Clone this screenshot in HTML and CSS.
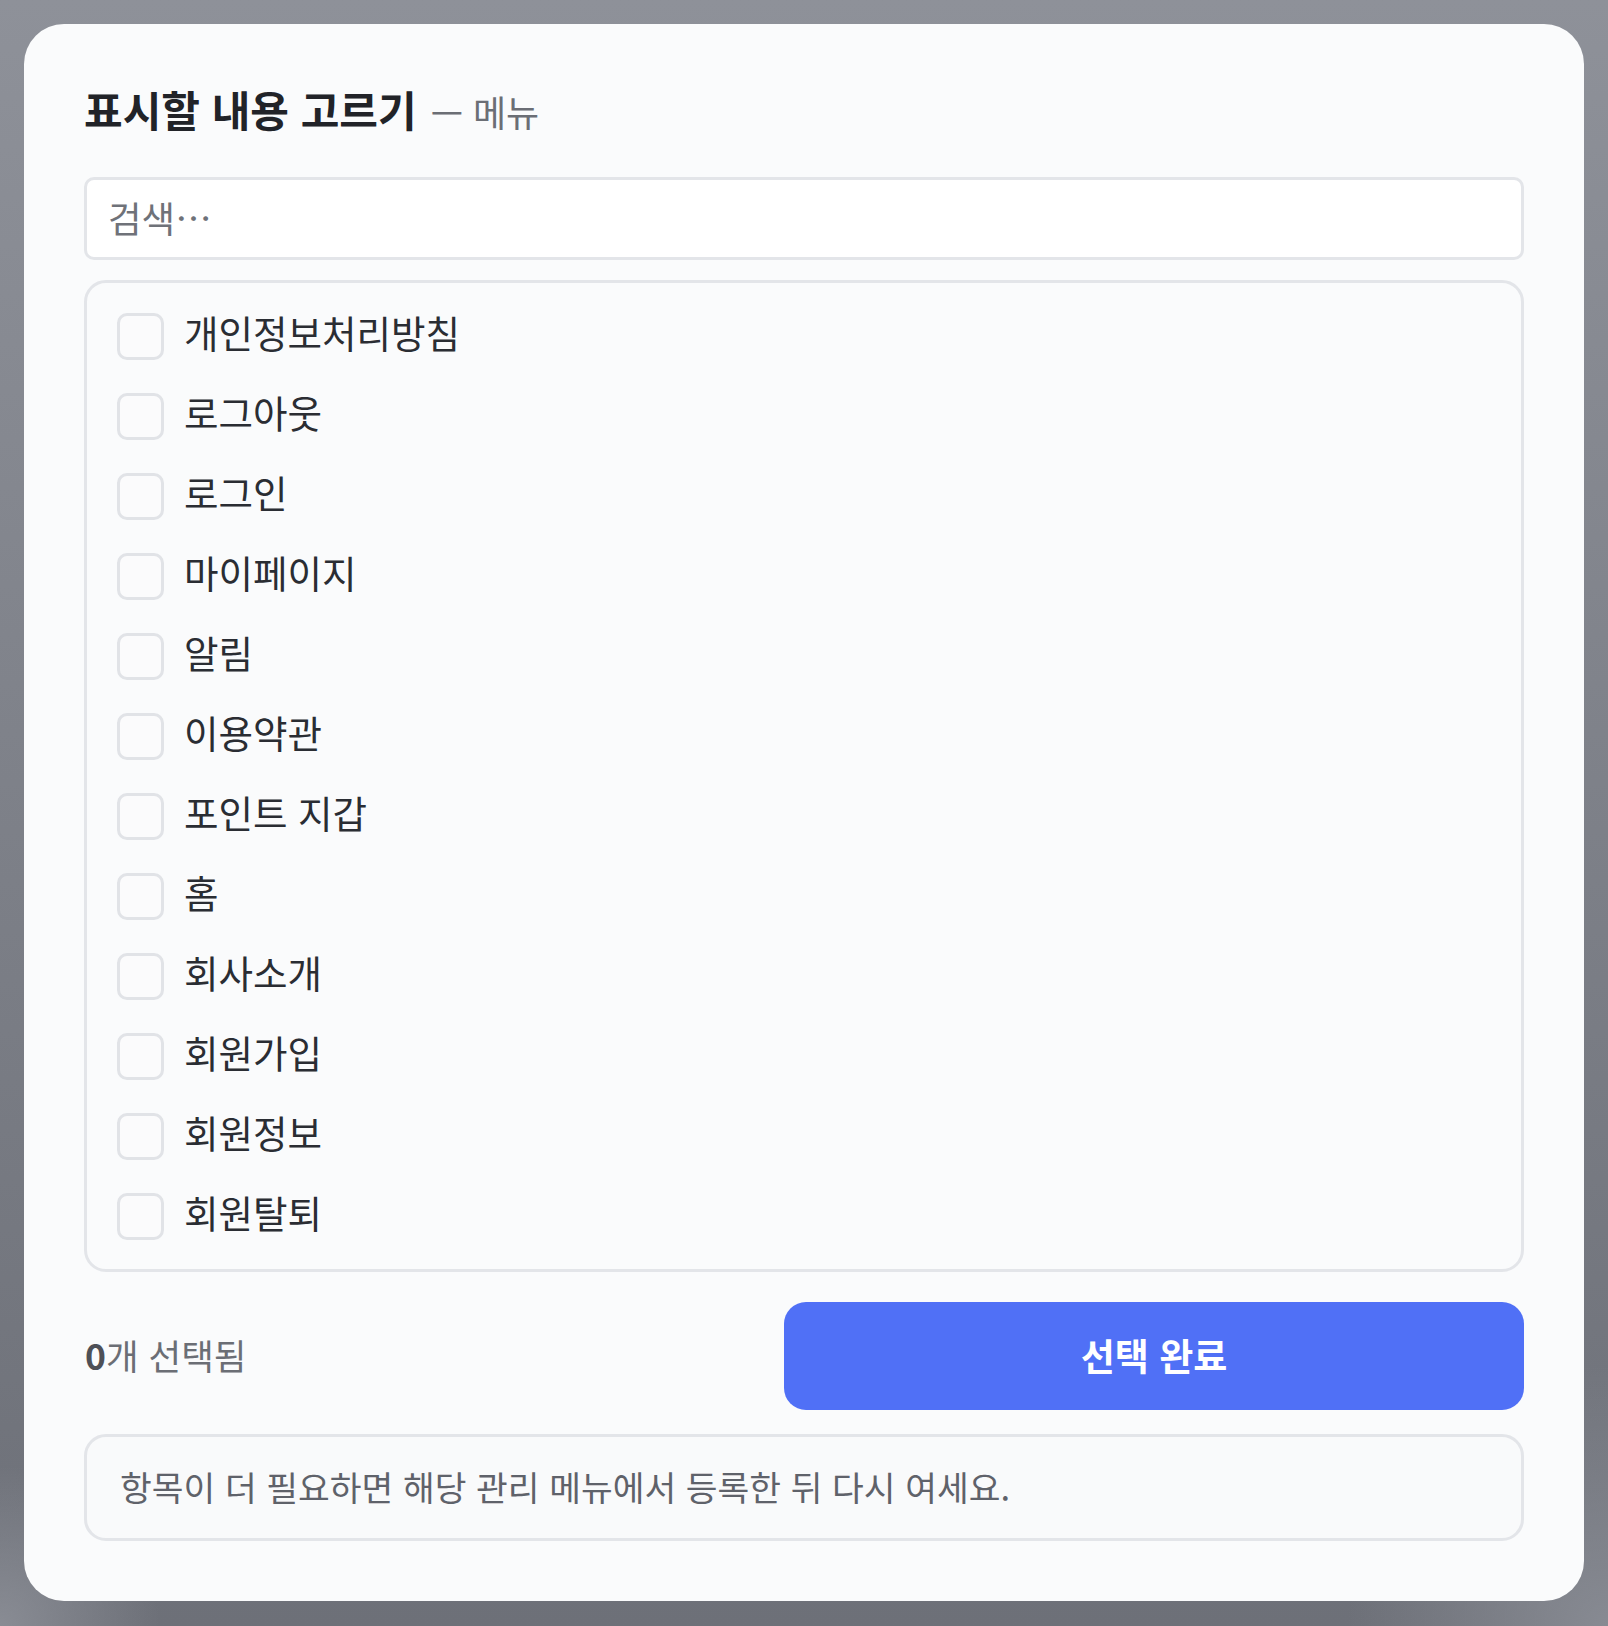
FILE: index.html
```html
<!DOCTYPE html>
<html lang="ko">
<head>
<meta charset="utf-8">
<title>표시할 내용 고르기</title>
<link rel="stylesheet" href="styles.css">
</head>
<body>
<div class="overlay">
  <div class="dialog">
    <h2 class="title"><span class="title-main">표시할 내용 고르기</span><span class="title-sub">— 메뉴</span></h2>
    <input class="search" type="text" placeholder="검색…">
    <ul class="list">
      <li class="row"><span class="box"></span><span class="label">개인정보처리방침</span></li>
      <li class="row"><span class="box"></span><span class="label">로그아웃</span></li>
      <li class="row"><span class="box"></span><span class="label">로그인</span></li>
      <li class="row"><span class="box"></span><span class="label">마이페이지</span></li>
      <li class="row"><span class="box"></span><span class="label">알림</span></li>
      <li class="row"><span class="box"></span><span class="label">이용약관</span></li>
      <li class="row"><span class="box"></span><span class="label">포인트 지갑</span></li>
      <li class="row"><span class="box"></span><span class="label">홈</span></li>
      <li class="row"><span class="box"></span><span class="label">회사소개</span></li>
      <li class="row"><span class="box"></span><span class="label">회원가입</span></li>
      <li class="row"><span class="box"></span><span class="label">회원정보</span></li>
      <li class="row"><span class="box"></span><span class="label">회원탈퇴</span></li>
    </ul>
    <div class="footer">
      <div class="count"><b class="count-num">0</b>개 선택됨</div>
      <button class="done" type="button">선택 완료</button>
    </div>
    <div class="note">항목이 더 필요하면 해당 관리 메뉴에서 등록한 뒤 다시 여세요.</div>
  </div>
</div>
</body>
</html>
```

FILE: styles.css
```css
* {
  box-sizing: border-box;
}

html, body {
  margin: 0;
  padding: 0;
}

body {
  font-family: "Noto Sans CJK KR", "Noto Sans", sans-serif;
  background: #7c7f87;
}

.overlay {
  min-height: 1626px;
  padding: 24px;
  background:
    radial-gradient(circle at 0% 100%, rgba(140, 143, 151, 0.9) 0, rgba(140, 143, 151, 0) 160px),
    radial-gradient(circle at 100% 100%, rgba(138, 141, 149, 0.9) 0, rgba(138, 141, 149, 0) 260px),
    linear-gradient(180deg, #8e9199 0%, #7f828a 45%, #6d7078 100%);
}

.dialog {
  background: #fafbfc;
  border-radius: 40px;
  padding: 60px 60px 60px;
  display: flex;
  flex-direction: column;
}

.title {
  margin: 0 0 43px;
  height: 50px;
  line-height: 50px;
  display: flex;
  align-items: baseline;
  white-space: nowrap;
}

.title-main {
  font-size: 42px;
  font-weight: 700;
  color: #212328;
}

.title-sub {
  margin-left: 14px;
  font-size: 36px;
  font-weight: 400;
  color: #6b6e75;
}

.search {
  display: block;
  width: 100%;
  height: 83px;
  margin: 0;
  padding: 0 21px 2px;
  border: 3px solid #e3e5e9;
  border-radius: 10px;
  background: #ffffff;
  font-family: inherit;
  font-size: 36.5px;
  color: #2a2d33;
  outline: none;
}

.search::placeholder {
  color: #6f7279;
  opacity: 1;
}

.list {
  list-style: none;
  margin: 20px 0 0;
  padding: 13px 30px;
  border: 3px solid #e3e5e9;
  border-radius: 22px;
  background: #fafbfc;
}

.row {
  height: 80px;
  display: flex;
  align-items: center;
  gap: 20px;
}

.box {
  flex: 0 0 47px;
  width: 47px;
  height: 47px;
  border: 3px solid #e1e3e7;
  border-radius: 10px;
  background: #fbfbfc;
}

.label {
  font-size: 37.5px;
  line-height: 1;
  padding-bottom: 8px;
  color: #2a2d33;
  white-space: nowrap;
}

.footer {
  margin-top: 30px;
  display: grid;
  grid-template-columns: 1fr 740px;
  align-items: center;
}

.count {
  font-size: 35.5px;
  color: #6b6e75;
  padding-left: 1px;
  padding-bottom: 4px;
}

.count-num {
  font-weight: 700;
  color: #4d5057;
}

.done {
  height: 108px;
  margin: 0;
  padding: 0 0 2px;
  border: none;
  border-radius: 22px;
  background: #5070f6;
  color: #ffffff;
  font-family: inherit;
  font-size: 37px;
  font-weight: 700;
  cursor: pointer;
}

.note {
  margin-top: 24px;
  height: 107px;
  display: flex;
  align-items: center;
  padding: 0 33px 4px;
  border: 3px solid #e3e5e9;
  border-radius: 22px;
  background: #f9fafb;
  font-size: 34.5px;
  color: #5f626a;
  white-space: nowrap;
}
```
